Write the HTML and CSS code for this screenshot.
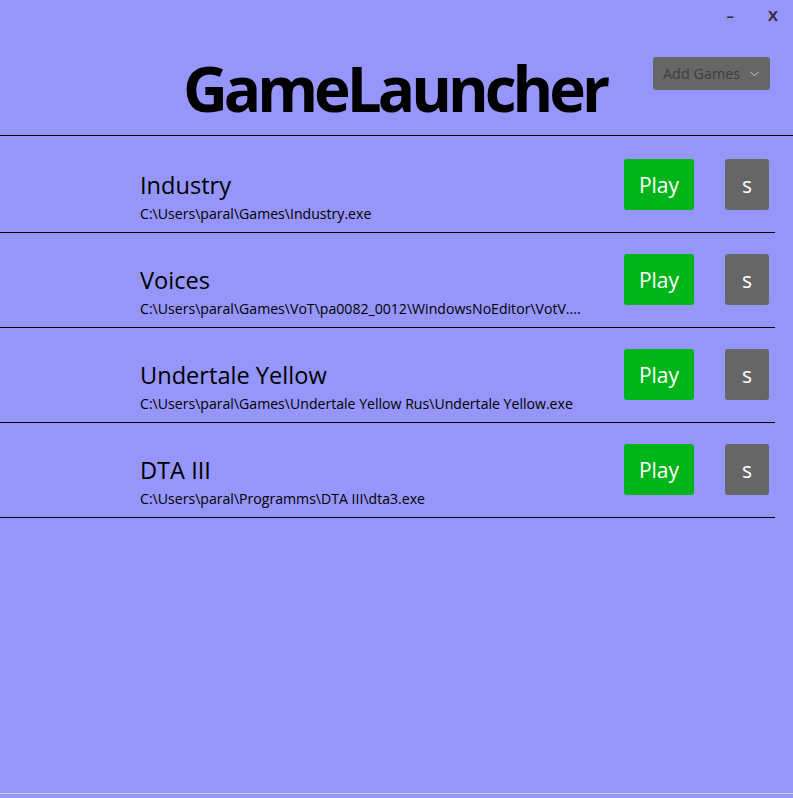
FILE: index.html
```html
<!DOCTYPE html>
<html>
<head>
<meta charset="utf-8">
<link rel="stylesheet" href="styles.css">
</head>
<body>
<div class="window">
  <div class="titlebar">
    <span class="tb-btn tb-min">–</span>
    <span class="tb-btn tb-close">X</span>
  </div>
  <header class="header">
    <div class="spacer"></div>
    <h1 class="title">GameLauncher</h1>
    <div class="add-wrap">
      <div class="add-games">
        <span class="add-label">Add Games</span>
        <svg class="chev" width="9" height="6" viewBox="0 0 9 6"><path d="M0.5 0.8 L4.5 4.8 L8.5 0.8" fill="none" stroke="#cfcfcf" stroke-width="1"/></svg>
      </div>
    </div>
  </header>
  <main class="list">
    <div class="row">
      <div class="info">
        <div class="name">Industry</div>
        <div class="path">C:\Users\paral\Games\Industry.exe</div>
      </div>
      <button class="play">Play</button>
      <button class="settings">s</button>
    </div>
    <div class="row">
      <div class="info">
        <div class="name">Voices</div>
        <div class="path">C:\Users\paral\Games\VoT\pa0082_0012\WindowsNoEditor\VotV....</div>
      </div>
      <button class="play">Play</button>
      <button class="settings">s</button>
    </div>
    <div class="row">
      <div class="info">
        <div class="name">Undertale Yellow</div>
        <div class="path">C:\Users\paral\Games\Undertale Yellow Rus\Undertale Yellow.exe</div>
      </div>
      <button class="play">Play</button>
      <button class="settings">s</button>
    </div>
    <div class="row">
      <div class="info">
        <div class="name">DTA III</div>
        <div class="path">C:\Users\paral\Programms\DTA III\dta3.exe</div>
      </div>
      <button class="play">Play</button>
      <button class="settings">s</button>
    </div>
  </main>
  <div class="bottom-line"></div>
</div>
</body>
</html>
```
FILE: styles.css
```css
html, body {
  margin: 0;
  padding: 0;
}
body {
  background: #9696fa;
  font-family: "Open Sans", "Noto Sans", sans-serif;
  color: #000;
}
.window {
  height: 798px;
  display: flex;
  flex-direction: column;
}
.titlebar {
  height: 30px;
  display: flex;
  justify-content: flex-end;
  align-items: center;
  gap: 34px;
  padding-right: 15px;
}
.tb-btn {
  font-weight: 700;
  font-size: 15px;
  color: #333;
  line-height: 1;
}
.header {
  height: 105px;
  border-bottom: 1px solid #000;
  display: grid;
  grid-template-columns: 1fr auto 1fr;
}
.title {
  margin: 0;
  font-size: 62px;
  font-weight: 700;
  letter-spacing: -4px;
  line-height: 1;
  padding-top: 27px;
  padding-right: 4px;
}
.add-wrap {
  display: flex;
  justify-content: flex-end;
  align-items: flex-start;
  padding-right: 23px;
  padding-top: 27px;
}
.add-games {
  width: 117px;
  height: 33px;
  box-sizing: border-box;
  background: #666;
  border-radius: 3px;
  display: flex;
  align-items: center;
  padding-left: 10px;
  padding-right: 11px;
  justify-content: space-between;
}
.add-label {
  font-size: 14.4px;
  color: #3e3e3e;
}
.list {
  flex: 1;
  padding-top: 2px;
}
.row {
  width: 775px;
  height: 95px;
  box-sizing: border-box;
  border-bottom: 1px solid #000;
  display: flex;
  align-items: flex-start;
  padding: 21px 6px 0 140px;
}
.info {
  flex: 1;
  padding-top: 12px;
}
.name {
  font-size: 23.6px;
  line-height: 28px;
}
.path {
  font-size: 14.1px;
  line-height: 18px;
  margin-top: 6px;
}
.play, .settings {
  border: none;
  border-radius: 3px;
  height: 51px;
  color: #fff;
  font-family: inherit;
  font-size: 21px;
  padding: 0;
}
.play {
  width: 70px;
  background: #00b419;
  margin-right: 31px;
}
.settings {
  width: 44px;
  background: #666;
}
.bottom-line {
  height: 4px;
  border-top: 1px solid #d4d4f4;
}
```
